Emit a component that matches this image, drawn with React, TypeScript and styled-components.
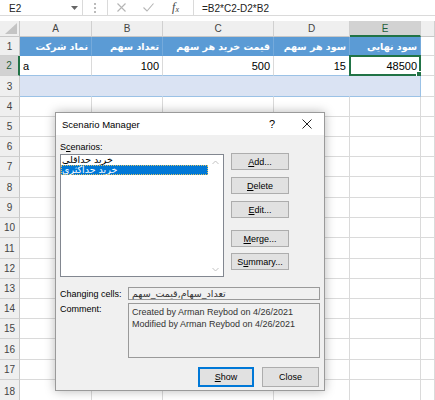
import React from 'react'
import styled, { createGlobalStyle, css } from 'styled-components'

const GlobalStyle = createGlobalStyle`
  html, body {
    margin: 0;
    padding: 0;
    background: #fff;
  }
  body {
    font-family: "Liberation Sans", "DejaVu Sans", sans-serif;
  }
`

const Page = styled.div`
  position: relative;
  width: 435px;
  height: 400px;
  overflow: hidden;
  background: #fff;
  display: flex;
  flex-direction: column;
`

/* ---------- formula bar ---------- */

const FormulaBar = styled.div`
  display: flex;
  height: 22px;
  box-sizing: border-box;
  border-bottom: 1px solid #dadada;
  margin-bottom: 5px;
  font-size: 10px;
  color: #222;
`

const NameBox = styled.div`
  width: 83px;
  box-sizing: border-box;
  display: flex;
  align-items: center;
  justify-content: space-between;
  padding: 1px 4px 0 9px;
  border-right: 1px solid #dadada;
`

const Grip = styled.div`
  width: 24px;
  display: flex;
  align-items: center;
  justify-content: center;
`

const FxZone = styled.div`
  width: 85px;
  display: flex;
  align-items: center;
  border-left: 1px solid #dadada;
  border-right: 1px solid #dadada;
`

const FxSlot = styled.div`
  width: 27px;
  height: 100%;
  display: flex;
  align-items: center;
  justify-content: center;
`

const FxText = styled.span`
  font-family: "Liberation Serif", serif;
  font-style: italic;
  font-size: 12px;
  color: #444;
  sub {
    font-size: 8px;
    vertical-align: -1px;
  }
`

const FormulaInput = styled.div`
  flex: 1;
  display: flex;
  align-items: center;
  padding: 1px 0 0 8px;
`

/* ---------- sheet ---------- */

const Sheet = styled.div`
  display: flex;
  flex-direction: column;
`

const SheetRow = styled.div<{ $h: number }>`
  display: grid;
  grid-template-columns: 20px 72px 71px 111px 76px 71px 1fr;
  height: ${({ $h }) => $h}px;
`

const Corner = styled.div`
  background: #efefef;
  box-sizing: border-box;
  border-right: 1px solid #c8c8c8;
  border-bottom: 1px solid #c8c8c8;
  display: flex;
  align-items: flex-end;
  justify-content: flex-end;
  padding: 0 2px 2px 0;
`

const ColHeader = styled.div<{ $active?: boolean }>`
  box-sizing: border-box;
  background: ${({ $active }) => ($active ? '#d2d2d2' : '#efefef')};
  border-right: 1px solid #d0d0d0;
  border-bottom: ${({ $active }) => ($active ? '2px solid #217346' : '1px solid #c8c8c8')};
  color: ${({ $active }) => ($active ? '#1e5e3a' : '#444')};
  font-size: 10px;
  display: flex;
  align-items: center;
  justify-content: center;
`

const RowHeader = styled.div<{ $active?: boolean }>`
  box-sizing: border-box;
  background: ${({ $active }) => ($active ? '#d2d2d2' : '#efefef')};
  border-right: ${({ $active }) => ($active ? '2px solid #217346' : '1px solid #c8c8c8')};
  border-bottom: 1px solid #d0d0d0;
  color: ${({ $active }) => ($active ? '#1e5e3a' : '#444')};
  font-size: 10px;
  display: flex;
  align-items: center;
  justify-content: center;
`

type CellKind = 'head' | 'data' | 'band' | 'plain'

const Cell = styled.div<{ $kind: CellKind; $align?: 'left' | 'right'; $edge?: boolean }>`
  position: relative;
  box-sizing: border-box;
  display: flex;
  align-items: center;
  justify-content: ${({ $align }) => ($align === 'left' ? 'flex-start' : 'flex-end')};
  padding: 0 3px;
  font-size: 11px;
  color: #000;
  white-space: nowrap;
  border-right: 1px solid #dadada;
  border-bottom: 1px solid #dadada;
  background: #fff;

  ${({ $kind }) =>
    $kind === 'head' &&
    css`
      background: #5b9bd5;
      color: #fff;
      font-family: "DejaVu Sans", sans-serif;
      font-size: 9.5px;
      font-weight: bold;
      border-right-color: #75aadb;
      border-bottom-color: #5b9bd5;
    `}

  ${({ $kind }) =>
    $kind === 'data' &&
    css`
      border-bottom-color: #9bc2e6;
    `}

  ${({ $kind, $edge }) =>
    $kind === 'band' &&
    css`
      background: #dae3f3;
      border-right-color: ${$edge ? '#9bc2e6' : '#dae3f3'};
      border-bottom-color: #9bc2e6;
    `}
`

const ActiveFrame = styled.div`
  position: absolute;
  left: -1px;
  top: -1px;
  right: -1px;
  bottom: -1px;
  border: 2px solid #217346;
  pointer-events: none;
`

const FillHandle = styled.div`
  position: absolute;
  right: -4px;
  bottom: -4px;
  width: 5px;
  height: 5px;
  background: #217346;
  border: 1px solid #fff;
`

/* ---------- dialog ---------- */

const Dialog = styled.div`
  position: absolute;
  left: 55px;
  top: 112px;
  width: 270px;
  height: 279px;
  box-sizing: border-box;
  border: 1px solid #9a9a9a;
  background: #f0f0f0;
  box-shadow: 0 0 10px rgba(0, 0, 0, 0.28);
  display: flex;
  flex-direction: column;
  font-size: 9px;
  color: #000;
`

const TitleBar = styled.div`
  height: 22px;
  background: #fff;
  display: flex;
  align-items: center;
  padding-left: 6px;
  font-size: 9.5px;
`

const TitleText = styled.div`
  flex: 1;
`

const TitleButton = styled.div<{ $w: number; $mr: number }>`
  width: ${({ $w }) => $w}px;
  margin-right: ${({ $mr }) => $mr}px;
  height: 100%;
  display: flex;
  align-items: center;
  justify-content: center;
  font-size: 11px;
`

const Body = styled.div`
  flex: 1;
  display: flex;
  flex-direction: column;
  padding: 6px 4px 0 4px;
`

const TopSection = styled.div`
  display: grid;
  grid-template-columns: 164px 58px;
  column-gap: 7px;
`

const Label = styled.div`
  line-height: 13px;
  height: 13px;
`

const U = styled.span`
  text-decoration: underline;
  text-underline-offset: 1px;
`

const ListBox = styled.div`
  height: 123px;
  box-sizing: border-box;
  background: #fff;
  border: 1px solid #828790;
  display: flex;
`

const ListItems = styled.div`
  flex: 1;
  display: flex;
  flex-direction: column;
`

const ListItem = styled.div<{ $selected?: boolean }>`
  height: 10px;
  line-height: 10px;
  box-sizing: border-box;
  padding-left: 1px;
  font-family: "DejaVu Sans", sans-serif;
  font-size: 9.5px;
  overflow: hidden;
  ${({ $selected }) =>
    $selected
      ? css`
          background: #0078d7;
          color: #fff;
          outline: 1px dotted #d9c26a;
          outline-offset: -1px;
        `
      : css`
          color: #000;
        `}
`

const ScrollTrack = styled.div`
  width: 15px;
  display: flex;
  flex-direction: column;
  justify-content: space-between;
  align-items: center;
  padding: 5px 0 4px;
`

const ButtonColumn = styled.div`
  display: flex;
  flex-direction: column;
  padding-top: 12px;
`

const DlgButton = styled.div<{ $gap?: number; $h?: number; $w?: number; $primary?: boolean }>`
  box-sizing: border-box;
  height: ${({ $h }) => $h ?? 17}px;
  width: ${({ $w }) => ($w ? `${$w}px` : '100%')};
  margin-top: ${({ $gap }) => $gap ?? 0}px;
  background: #e1e1e1;
  border: 1px solid ${({ $primary }) => ($primary ? '#0078d7' : '#adadad')};
  box-shadow: ${({ $primary }) => ($primary ? 'inset 0 0 0 1px #0078d7' : 'none')};
  display: flex;
  align-items: center;
  justify-content: center;
  font-size: 9px;
`

const FieldRow = styled.div<{ $mt: number }>`
  display: grid;
  grid-template-columns: 68px 1fr;
  margin-top: ${({ $mt }) => $mt}px;
`

const FieldLabel = styled.div<{ $top?: boolean }>`
  display: flex;
  align-items: ${({ $top }) => ($top ? 'flex-start' : 'center')};
  padding-top: ${({ $top }) => ($top ? 1 : 0)}px;
`

const Field = styled.div<{ $h: number; $rtl?: boolean }>`
  height: ${({ $h }) => $h}px;
  box-sizing: border-box;
  border: 1px solid #9a9a9a;
  background: #f0f0f0;
  padding: 0 3px;
  line-height: 11px;
  font-family: ${({ $rtl }) => ($rtl ? '"DejaVu Sans", sans-serif' : '"Liberation Sans", sans-serif')};
  font-size: ${({ $rtl }) => ($rtl ? 9.5 : 9)}px;
  color: #333;
`

const CommentText = styled.div`
  padding-top: 2px;
  line-height: 12px;
`

const Footer = styled.div`
  display: flex;
  justify-content: flex-end;
  gap: 8px;
  margin-top: 9px;
  padding-right: 1px;
`

/* ---------- icons ---------- */

const Chevron = ({ up }: { up?: boolean }) => (
  <svg width="7" height="5" viewBox="0 0 7 5">
    <polyline
      points={up ? '0.5,4 3.5,1 6.5,4' : '0.5,1 3.5,4 6.5,1'}
      fill="none"
      stroke="#c2c2c2"
      strokeWidth="1"
    />
  </svg>
)

const CloseGlyph = () => (
  <svg width="10" height="10" viewBox="0 0 10 10">
    <path d="M0.5 0.5 L9.5 9.5 M9.5 0.5 L0.5 9.5" stroke="#222" strokeWidth="1" />
  </svg>
)

const columns = ['A', 'B', 'C', 'D', 'E']
const heads = ['نماد شرکت', 'تعداد سهم', 'قیمت خرید هر سهم', 'سود هر سهم', 'سود نهایی']
const values = ['a', '100', '500', '15', '48500']
const rowHeights = [20, 20, 20, 20, 21, 20, 20, 21, 20, 20, 20, 20, 21, 20, 24]

const App = () => {
  return (
    <Page>
      <GlobalStyle />
      <FormulaBar>
        <NameBox>
          <span>E2</span>
          <svg width="7" height="4" viewBox="0 0 7 4">
            <polygon points="0,0 7,0 3.5,4" fill="#666" />
          </svg>
        </NameBox>
        <Grip>
          <svg width="2" height="10" viewBox="0 0 2 10">
            <rect x="0" y="0" width="2" height="2" fill="#bbb" />
            <rect x="0" y="4" width="2" height="2" fill="#bbb" />
            <rect x="0" y="8" width="2" height="2" fill="#bbb" />
          </svg>
        </Grip>
        <FxZone>
          <FxSlot>
            <svg width="9" height="9" viewBox="0 0 9 9">
              <path d="M0.5 0.5 L8.5 8.5 M8.5 0.5 L0.5 8.5" stroke="#b5b5b5" strokeWidth="1.1" />
            </svg>
          </FxSlot>
          <FxSlot>
            <svg width="11" height="9" viewBox="0 0 11 9">
              <path d="M0.5 4.5 L4 8 L10.5 0.5" fill="none" stroke="#b5b5b5" strokeWidth="1.1" />
            </svg>
          </FxSlot>
          <FxSlot>
            <FxText>
              f<sub>x</sub>
            </FxText>
          </FxSlot>
        </FxZone>
        <FormulaInput>=B2*C2-D2*B2</FormulaInput>
      </FormulaBar>

      <Sheet>
        <SheetRow $h={16}>
          <Corner>
            <svg width="12" height="11" viewBox="0 0 12 11">
              <polygon points="12,0 12,11 0,11" fill="#c4c4c4" />
            </svg>
          </Corner>
          {columns.map((c) => (
            <ColHeader key={c} $active={c === 'E'}>
              {c}
            </ColHeader>
          ))}
          <ColHeader />
        </SheetRow>

        <SheetRow $h={19}>
          <RowHeader>1</RowHeader>
          {heads.map((h) => (
            <Cell key={h} $kind="head">
              {h}
            </Cell>
          ))}
          <Cell $kind="plain" />
        </SheetRow>

        <SheetRow $h={20}>
          <RowHeader $active>2</RowHeader>
          {values.map((v, i) => (
            <Cell key={i} $kind="data" $align={i === 0 ? 'left' : 'right'}>
              {v}
              {i === 4 && (
                <ActiveFrame>
                  <FillHandle />
                </ActiveFrame>
              )}
            </Cell>
          ))}
          <Cell $kind="plain" />
        </SheetRow>

        <SheetRow $h={21}>
          <RowHeader>3</RowHeader>
          {columns.map((c) => (
            <Cell key={c} $kind="band" $edge={c === 'E'} />
          ))}
          <Cell $kind="plain" />
        </SheetRow>

        {rowHeights.map((h, i) => (
          <SheetRow key={i} $h={h}>
            <RowHeader>{i + 4}</RowHeader>
            {columns.map((c) => (
              <Cell key={c} $kind="plain" />
            ))}
            <Cell $kind="plain" />
          </SheetRow>
        ))}
      </Sheet>

      <Dialog>
        <TitleBar>
          <TitleText>Scenario Manager</TitleText>
          <TitleButton $w={20} $mr={10}>?</TitleButton>
          <TitleButton $w={30} $mr={2}>
            <CloseGlyph />
          </TitleButton>
        </TitleBar>
        <Body>
          <TopSection>
            <div>
              <Label>
                S<U>c</U>enarios:
              </Label>
              <ListBox>
                <ListItems>
                  <ListItem>خرید حداقلی</ListItem>
                  <ListItem $selected>خرید حداکثری</ListItem>
                </ListItems>
                <ScrollTrack>
                  <Chevron up />
                  <Chevron />
                </ScrollTrack>
              </ListBox>
            </div>
            <ButtonColumn>
              <DlgButton>
                <U>A</U>dd...
              </DlgButton>
              <DlgButton $gap={7}>
                <U>D</U>elete
              </DlgButton>
              <DlgButton $gap={7}>
                <U>E</U>dit...
              </DlgButton>
              <DlgButton $gap={12}>
                <U>M</U>erge...
              </DlgButton>
              <DlgButton $gap={6}>
                S<U>u</U>mmary...
              </DlgButton>
            </ButtonColumn>
          </TopSection>

          <FieldRow $mt={10}>
            <FieldLabel>Changing cells:</FieldLabel>
            <Field $h={13} $rtl>
              تعداد_سهام,قیمت_سهم
            </Field>
          </FieldRow>

          <FieldRow $mt={3}>
            <FieldLabel $top>Comment:</FieldLabel>
            <Field $h={55}>
              <CommentText>
                Created by Arman Reybod on 4/26/2021
                <br />
                Modified by Arman Reybod on 4/26/2021
              </CommentText>
            </Field>
          </FieldRow>

          <Footer>
            <DlgButton $h={20} $w={56} $primary>
              <U>S</U>how
            </DlgButton>
            <DlgButton $h={20} $w={57}>
              Close
            </DlgButton>
          </Footer>
        </Body>
      </Dialog>
    </Page>
  )
}

export default App
